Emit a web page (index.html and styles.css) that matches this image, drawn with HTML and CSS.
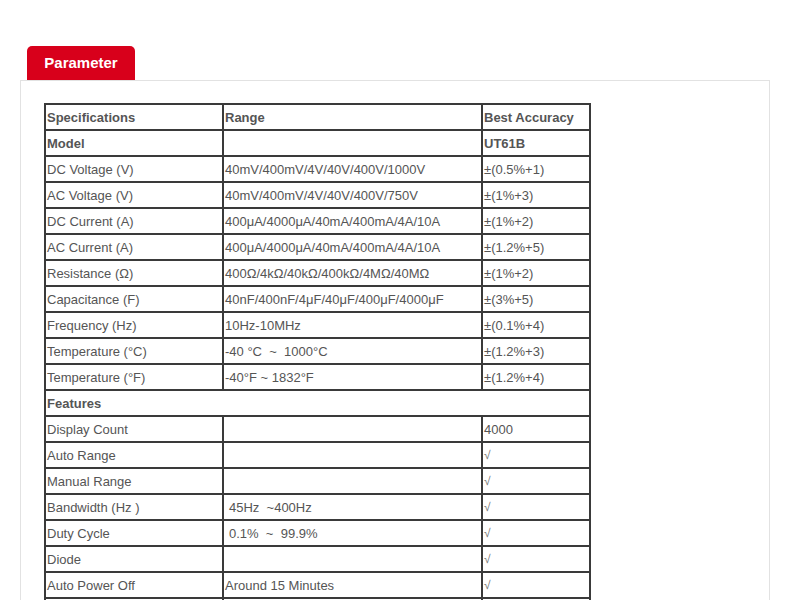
FILE: index.html
```html
<!DOCTYPE html>
<html>
<head>
<meta charset="utf-8">
<link rel="stylesheet" href="styles.css">
</head>
<body>
<div class="wrap">
  <div class="tabs"><div class="tab">Parameter</div></div>
  <div class="panel">
    <table class="spec">
      <tr class="b"><td class="c1">Specifications</td><td class="c2">Range</td><td class="c3">Best Accuracy</td></tr>
      <tr class="b"><td>Model</td><td></td><td>UT61B</td></tr>
      <tr><td>DC Voltage (V)</td><td>40mV/400mV/4V/40V/400V/1000V</td><td>±(0.5%+1)</td></tr>
      <tr><td>AC Voltage (V)</td><td>40mV/400mV/4V/40V/400V/750V</td><td>±(1%+3)</td></tr>
      <tr><td>DC Current (A)</td><td>400μA/4000μA/40mA/400mA/4A/10A</td><td>±(1%+2)</td></tr>
      <tr><td>AC Current (A)</td><td>400μA/4000μA/40mA/400mA/4A/10A</td><td>±(1.2%+5)</td></tr>
      <tr><td>Resistance (Ω)</td><td>400Ω/4kΩ/40kΩ/400kΩ/4MΩ/40MΩ</td><td>±(1%+2)</td></tr>
      <tr><td>Capacitance (F)</td><td>40nF/400nF/4μF/40μF/400μF/4000μF</td><td>±(3%+5)</td></tr>
      <tr><td>Frequency (Hz)</td><td>10Hz-10MHz</td><td>±(0.1%+4)</td></tr>
      <tr><td>Temperature (°C)</td><td>-40 °C&nbsp; ~&nbsp; 1000°C</td><td>±(1.2%+3)</td></tr>
      <tr><td>Temperature (°F)</td><td>-40°F ~ 1832°F</td><td>±(1.2%+4)</td></tr>
      <tr class="b"><td colspan="3">Features</td></tr>
      <tr><td>Display Count</td><td></td><td>4000</td></tr>
      <tr><td>Auto Range</td><td></td><td class="ck">√</td></tr>
      <tr><td>Manual Range</td><td></td><td class="ck">√</td></tr>
      <tr><td>Bandwidth (Hz )</td><td class="ind">45Hz&nbsp; ~400Hz</td><td class="ck">√</td></tr>
      <tr><td>Duty Cycle</td><td class="ind">0.1%&nbsp; ~&nbsp; 99.9%</td><td class="ck">√</td></tr>
      <tr><td>Diode</td><td></td><td class="ck">√</td></tr>
      <tr><td>Auto Power Off</td><td>Around 15 Minutes</td><td class="ck">√</td></tr>
      <tr><td></td><td></td><td></td></tr>
    </table>
  </div>
</div>
</body>
</html>
```

FILE: styles.css
```css
html, body {
  margin: 0;
  padding: 0;
  background: #fff;
}
.wrap {
  padding: 46px 20px 0 20px;
}
.tabs {
  display: flex;
  padding-left: 7px;
}
.tab {
  width: 108px;
  height: 34px;
  background: #d8001b;
  color: #fff;
  font-family: "Liberation Sans", Arial, sans-serif;
  font-weight: bold;
  font-size: 15px;
  line-height: 34px;
  text-align: center;
  border-radius: 5px 5px 0 0;
}
.panel {
  border: 1px solid #e2e2e2;
  border-bottom: none;
  height: 600px;
  padding: 22px 23px 0 23px;
}
.spec {
  border-collapse: separate;
  border-spacing: 0;
  border: 1px solid #3a3a3a;
  width: 547px;
  font-family: "Liberation Sans", Arial, sans-serif;
  font-size: 13px;
  color: #555;
}
.spec td {
  border: 1px solid #3a3a3a;
  padding: 0 0 0 1px;
  box-sizing: border-box;
  height: 26px;
  vertical-align: middle;
  white-space: nowrap;
}
.spec .c1 { width: 178px; }
.spec .c2 { width: 259px; }
.spec .b td { font-weight: bold; }
.spec .ind { padding-left: 5px; }
.spec .ck { font-family: "DejaVu Sans", sans-serif; font-size: 12px; color: #777; font-weight: 300; }
```
